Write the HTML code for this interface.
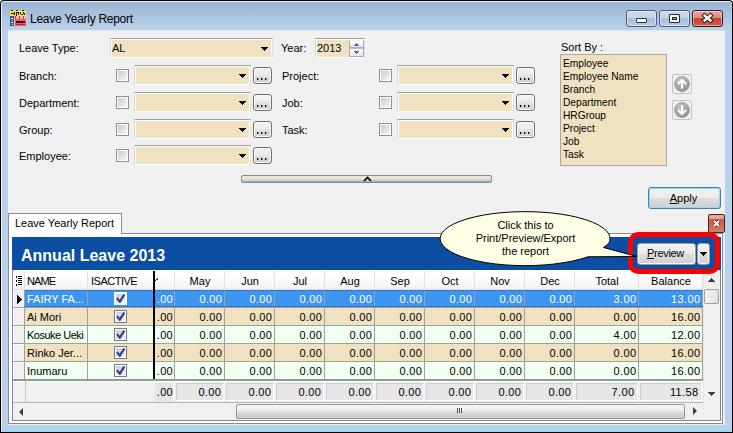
<!DOCTYPE html><html><head><meta charset="utf-8"><style>
*{margin:0;padding:0;box-sizing:border-box}
html,body{width:733px;height:433px;overflow:hidden;background:#f0f0f0}
body{position:relative;font-family:"Liberation Sans",sans-serif;font-size:11px;color:#000}
div{position:absolute}
.t{white-space:nowrap;line-height:13px;font-size:11px}
.cb{border:1px solid #8e8f8f;background:linear-gradient(135deg,#c6c6c6,#fbfbfb);box-shadow:inset 0 0 0 1px #fff}
.combo{background:#f0e2c0;border-top:1px solid #a0a0a0;border-left:1px solid #d8d8d8;border-right:1px solid #e2e2e2;box-shadow:inset 0 0 0 1px #fff}
.arr{width:7px;height:4px;background:#000;clip-path:polygon(0 0,7px 0,7px 1px,6px 1px,6px 2px,5px 2px,5px 3px,4px 3px,4px 4px,3px 4px,3px 3px,2px 3px,2px 2px,1px 2px,1px 1px,0 1px)}
.arru{width:7px;height:4px;background:#000;clip-path:polygon(3px 0,4px 0,4px 1px,5px 1px,5px 2px,6px 2px,6px 3px,7px 3px,7px 4px,0 4px,0 3px,1px 3px,1px 2px,2px 2px,2px 1px,3px 1px)}
.btn3{border:1px solid #707070;border-radius:3px;background:linear-gradient(#f4f4f4 0%,#ececec 40%,#dcdcdc 60%,#d0d0d0 100%);box-shadow:inset 0 0 0 1px #fafafa}
.dot{width:2px;height:2px;background:linear-gradient(90deg,#000 50%,#9a9a9a 50%)}
</style></head><body>
<div style="left:0px;top:0px;width:733px;height:433px;background:#000;border-radius:4px 4px 0 0"></div>
<div style="left:1px;top:1px;width:731px;height:431px;background:#b9d1ea;border-radius:3px 3px 0 0;border-top:1px solid #e9f0f8;border-left:1px solid #e4f0fa;border-right:1px solid #a2dcf7;border-bottom:2px solid #90def8"></div>
<div style="left:2px;top:2px;width:729px;height:28px;background:linear-gradient(#9ab4d2,#bad2ea);border-radius:2px 2px 0 0"></div>
<div style="left:8px;top:30px;width:717px;height:395px;background:#f0f0f0;border:1px solid #e6edf5;border-top-color:#dde6f0"></div>
<svg style="position:absolute;left:10px;top:10px" width="16" height="16" viewBox="0 0 16 16" shape-rendering="crispEdges">
<rect x="0" y="0" width="16" height="16" fill="#f2b4b0"/>
<rect x="0" y="1" width="16" height="5" fill="#f5e62e"/>
<rect x="1" y="0" width="2" height="1" fill="#222"/><rect x="6" y="0" width="2" height="1" fill="#222"/><rect x="12" y="0" width="2" height="1" fill="#222"/>
<path d="M1 3h3v1h-3zM4 2h1v3h-1zM6 2h1v4h-1zM7 2h2v1h-2zM8 3h1v2h-1zM10 2h1v2h-1zM11 4h2v1h-2zM13 2h1v2h-1zM14 3h1v2h-1z" fill="#1a1a1a"/>
<rect x="0" y="6" width="4" height="10" fill="#2a4fc0"/>
<rect x="1" y="8" width="2" height="1" fill="#fff"/><rect x="2" y="10" width="1" height="1" fill="#fff"/><rect x="1" y="12" width="2" height="1" fill="#fff"/><rect x="2" y="14" width="1" height="1" fill="#fff"/>
<rect x="5" y="6" width="1" height="3" fill="#d03040"/><rect x="9" y="6" width="1" height="3" fill="#d03040"/><rect x="13" y="6" width="1" height="3" fill="#d03040"/>
<rect x="5" y="9" width="11" height="7" fill="#e8606a"/>
<rect x="6" y="11" width="9" height="2" fill="#3a0a10"/>
<rect x="6" y="14" width="9" height="1" fill="#c02030"/>
</svg>
<div class="t" style="left:30px;top:12px;text-align:left;font-size:12px;letter-spacing:-0.28px;line-height:15px">Leave Yearly Report</div>
<div style="left:626px;top:10px;width:31px;height:17px;background:linear-gradient(#cbdcee 0%,#c2d5eb 45%,#a7c0dd 50%,#b3cbe5 100%);border:1px solid #4a5c74;border-radius:3px;box-shadow:inset 0 0 0 1px rgba(255,255,255,.45)"></div>
<div style="left:659px;top:10px;width:31px;height:17px;background:linear-gradient(#cbdcee 0%,#c2d5eb 45%,#a7c0dd 50%,#b3cbe5 100%);border:1px solid #4a5c74;border-radius:3px;box-shadow:inset 0 0 0 1px rgba(255,255,255,.45)"></div>
<div style="left:692px;top:10px;width:31px;height:17px;background:linear-gradient(#e9a99b 0%,#dc8b7b 45%,#c5452f 50%,#cf5a42 100%);border:1px solid #2f1e23;border-radius:3px;box-shadow:inset 0 0 0 1px rgba(255,255,255,.45)"></div>
<div style="left:636px;top:18px;width:11px;height:5px;background:#fff;border:1px solid #333;border-radius:1px"></div>
<div style="left:669px;top:14px;width:11px;height:9px;border:1px solid #2a2a2a;border-radius:1px;background:#fff"><div style="left:2px;top:2px;width:5px;height:3px;border:1px solid #2a2a2a;background:#9fb4cc"></div></div>
<svg style="position:absolute;left:701px;top:12px" width="13" height="12" viewBox="0 0 13 12">
<path d="M3.5 3.5L9.5 8.5M9.5 3.5L3.5 8.5" stroke="#2a1a1a" stroke-width="4.4" stroke-linecap="square"/>
<path d="M3.5 3.5L9.5 8.5M9.5 3.5L3.5 8.5" stroke="#fff" stroke-width="2.4" stroke-linecap="square"/>
</svg>
<div class="t" style="left:19px;top:42px;text-align:left;">Leave Type:</div>
<div class="combo" style="left:110px;top:38px;width:163px;height:20px"></div>
<div class="t" style="left:112px;top:42px;text-align:left;">AL</div>
<div class="arr" style="left:261px;top:47px"></div>
<div class="t" style="left:281px;top:42px;text-align:left;">Year:</div>
<div class="combo" style="left:315px;top:38px;width:50px;height:20px;background:#fbfbfb"></div>
<div style="left:317px;top:40px;width:32px;height:17px;background:#f0e2c0"></div>
<div class="t" style="left:317px;top:42px;text-align:left;">2013</div>
<div style="left:349px;top:40px;width:15px;height:8px;border:1px solid #a9a9b0;border-top-color:#f4f4f4;background:linear-gradient(#fdfdfd,#e8e8ea)"></div>
<div style="left:349px;top:48px;width:15px;height:9px;border:1px solid #a9a9b0;border-top-color:#bdbdc4;background:linear-gradient(#fdfdfd,#e8e8ea)"></div>
<div style="left:354px;top:43px;width:5px;height:3px;background:#5c66a6;clip-path:polygon(2px 0,3px 0,3px 1px,4px 1px,4px 2px,5px 2px,5px 3px,0 3px,0 2px,1px 2px,1px 1px,2px 1px)"></div>
<div style="left:354px;top:51px;width:5px;height:3px;background:#5c66a6;clip-path:polygon(0 0,5px 0,5px 1px,4px 1px,4px 2px,3px 2px,3px 3px,2px 3px,2px 2px,1px 2px,1px 1px,0 1px)"></div>
<div class="t" style="left:19px;top:70px;text-align:left;">Branch:</div>
<div class="cb" style="left:116px;top:69px;width:13px;height:13px"></div>
<div class="combo" style="left:134px;top:65px;width:117px;height:20px"></div>
<div class="arr" style="left:239px;top:74px"></div>
<div class="btn3" style="left:253px;top:67px;width:19px;height:17px"></div>
<div class="dot" style="left:257px;top:78px"></div>
<div class="dot" style="left:261px;top:78px"></div>
<div class="dot" style="left:265px;top:78px"></div>
<div class="t" style="left:282px;top:70px;text-align:left;">Project:</div>
<div class="cb" style="left:379px;top:69px;width:13px;height:13px"></div>
<div class="combo" style="left:397px;top:65px;width:117px;height:20px"></div>
<div class="arr" style="left:502px;top:74px"></div>
<div class="btn3" style="left:516px;top:67px;width:19px;height:17px"></div>
<div class="dot" style="left:520px;top:78px"></div>
<div class="dot" style="left:524px;top:78px"></div>
<div class="dot" style="left:528px;top:78px"></div>
<div class="t" style="left:19px;top:97px;text-align:left;">Department:</div>
<div class="cb" style="left:116px;top:96px;width:13px;height:13px"></div>
<div class="combo" style="left:134px;top:92px;width:117px;height:20px"></div>
<div class="arr" style="left:239px;top:101px"></div>
<div class="btn3" style="left:253px;top:94px;width:19px;height:17px"></div>
<div class="dot" style="left:257px;top:105px"></div>
<div class="dot" style="left:261px;top:105px"></div>
<div class="dot" style="left:265px;top:105px"></div>
<div class="t" style="left:282px;top:97px;text-align:left;">Job:</div>
<div class="cb" style="left:379px;top:96px;width:13px;height:13px"></div>
<div class="combo" style="left:397px;top:92px;width:117px;height:20px"></div>
<div class="arr" style="left:502px;top:101px"></div>
<div class="btn3" style="left:516px;top:94px;width:19px;height:17px"></div>
<div class="dot" style="left:520px;top:105px"></div>
<div class="dot" style="left:524px;top:105px"></div>
<div class="dot" style="left:528px;top:105px"></div>
<div class="t" style="left:19px;top:124px;text-align:left;">Group:</div>
<div class="cb" style="left:116px;top:123px;width:13px;height:13px"></div>
<div class="combo" style="left:134px;top:119px;width:117px;height:20px"></div>
<div class="arr" style="left:239px;top:128px"></div>
<div class="btn3" style="left:253px;top:121px;width:19px;height:17px"></div>
<div class="dot" style="left:257px;top:132px"></div>
<div class="dot" style="left:261px;top:132px"></div>
<div class="dot" style="left:265px;top:132px"></div>
<div class="t" style="left:282px;top:124px;text-align:left;">Task:</div>
<div class="cb" style="left:379px;top:123px;width:13px;height:13px"></div>
<div class="combo" style="left:397px;top:119px;width:117px;height:20px"></div>
<div class="arr" style="left:502px;top:128px"></div>
<div class="btn3" style="left:516px;top:121px;width:19px;height:17px"></div>
<div class="dot" style="left:520px;top:132px"></div>
<div class="dot" style="left:524px;top:132px"></div>
<div class="dot" style="left:528px;top:132px"></div>
<div class="t" style="left:19px;top:150px;text-align:left;">Employee:</div>
<div class="cb" style="left:116px;top:149px;width:13px;height:13px"></div>
<div class="combo" style="left:134px;top:145px;width:117px;height:20px"></div>
<div class="arr" style="left:239px;top:154px"></div>
<div class="btn3" style="left:253px;top:147px;width:19px;height:17px"></div>
<div class="dot" style="left:257px;top:158px"></div>
<div class="dot" style="left:261px;top:158px"></div>
<div class="dot" style="left:265px;top:158px"></div>
<div style="left:241px;top:175px;width:251px;height:8px;border:1px solid #8b8a82;border-radius:2px;background:linear-gradient(#f2e3c4 0%,#ece4d0 40%,#d9e4ea 55%,#93a9bb 100%)"></div>
<svg style="position:absolute;left:363px;top:176px" width="9" height="6" viewBox="0 0 9 6"><path d="M1 5L4.5 1.5L8 5" stroke="#000" stroke-width="1.6" fill="none"/></svg>
<div class="t" style="left:561px;top:41px;text-align:left;">Sort By :</div>
<div style="left:560px;top:54px;width:107px;height:112px;background:#f0e2c0;border:1px solid #a8a8a8"></div>
<div class="t" style="left:563px;top:57px;text-align:left;font-size:10.2px">Employee</div>
<div class="t" style="left:563px;top:70px;text-align:left;font-size:10.2px">Employee Name</div>
<div class="t" style="left:563px;top:83px;text-align:left;font-size:10.2px">Branch</div>
<div class="t" style="left:563px;top:96px;text-align:left;font-size:10.2px">Department</div>
<div class="t" style="left:563px;top:109px;text-align:left;font-size:10.2px">HRGroup</div>
<div class="t" style="left:563px;top:122px;text-align:left;font-size:10.2px">Project</div>
<div class="t" style="left:563px;top:135px;text-align:left;font-size:10.2px">Job</div>
<div class="t" style="left:563px;top:148px;text-align:left;font-size:10.2px">Task</div>
<div style="left:672px;top:74px;width:20px;height:20px;border:1px solid #c4c4c4;border-radius:2px;background:#f0f0f0"></div>
<svg style="position:absolute;left:674px;top:76px" width="16" height="16" viewBox="0 0 16 16">
<defs><radialGradient id="g74" cx="0.4" cy="0.3" r="0.8"><stop offset="0" stop-color="#c8c8c8"/><stop offset="1" stop-color="#8a8a8a"/></radialGradient></defs>
<circle cx="8" cy="8" r="7.5" fill="url(#g74)" stroke="#9a9a9a" stroke-width="0.8"/>
<path d="M8 12V4M4.5 7.5L8 4L11.5 7.5" stroke="#fff" stroke-width="2" fill="none" stroke-linecap="round"/></svg>
<div style="left:672px;top:100px;width:20px;height:20px;border:1px solid #c4c4c4;border-radius:2px;background:#f0f0f0"></div>
<svg style="position:absolute;left:674px;top:102px" width="16" height="16" viewBox="0 0 16 16">
<defs><radialGradient id="g100" cx="0.4" cy="0.3" r="0.8"><stop offset="0" stop-color="#c8c8c8"/><stop offset="1" stop-color="#8a8a8a"/></radialGradient></defs>
<circle cx="8" cy="8" r="7.5" fill="url(#g100)" stroke="#9a9a9a" stroke-width="0.8"/>
<path d="M8 4V12M4.5 8.5L8 12L11.5 8.5" stroke="#fff" stroke-width="2" fill="none" stroke-linecap="round"/></svg>
<div style="left:648px;top:187px;width:73px;height:22px;border:1px solid #3c7fb1;border-radius:3px;background:linear-gradient(#f2f2f2 0%,#ebebeb 50%,#dddddd 51%,#cfcfcf 100%);box-shadow:inset 0 0 0 1px #8fdcf6"></div>
<div class="t" style="left:647px;top:192px;width:73px;text-align:center;"><u>A</u>pply</div>
<div style="left:8px;top:213px;width:114px;height:21px;background:#fff;border:1px solid #898c95;border-bottom:none"></div>
<div class="t" style="left:15px;top:217px;text-align:left;">Leave Yearly Report</div>
<div style="left:8px;top:233px;width:715px;height:191px;background:#fff;border:1px solid #898c95"></div>
<div style="left:9px;top:233px;width:112px;height:2px;background:#fff"></div>
<div style="left:708px;top:214px;width:17px;height:19px;border:1px solid #3d2b2b;border-radius:2px;background:linear-gradient(#eba999 0%,#e6a090 22%,#c65a48 24%,#cc6a58 70%,#d88070 100%)"></div>
<svg style="position:absolute;left:712px;top:219px" width="9" height="9" viewBox="0 0 9 9"><path d="M2 2L7 7M7 2L2 7" stroke="#5a2a22" stroke-width="3.2"/><path d="M2 2L7 7M7 2L2 7" stroke="#fff" stroke-width="1.8"/></svg>
<div style="left:12px;top:237px;width:709px;height:184px;background:#f0f0f0;border:1px solid #828790"></div>
<div style="left:12px;top:237px;width:709px;height:33px;background:#0b4ea2"></div>
<div class="t" style="left:21px;top:246px;text-align:left;font-size:16px;font-weight:bold;color:#fff;line-height:19px">Annual Leave 2013</div>
<div style="left:637px;top:243px;width:59px;height:22px;border:1px solid #9a9a9a;border-radius:3px;box-shadow:inset 0 0 0 1px #f8f8f8;background:linear-gradient(#f2f2f2 0%,#ebebeb 50%,#dddddd 51%,#cfcfcf 100%)"></div>
<div class="t" style="left:636px;top:247px;width:59px;text-align:center;letter-spacing:-0.3px"><u>P</u>review</div>
<div style="left:697px;top:243px;width:13px;height:22px;border:1px solid #9a9a9a;border-radius:3px;box-shadow:inset 0 0 0 1px #f8f8f8;background:linear-gradient(#f2f2f2 0%,#ebebeb 50%,#dddddd 51%,#cfcfcf 100%)"></div>
<div class="arr" style="left:700px;top:252px"></div>
<div style="left:13px;top:270px;width:690px;height:20px;background:linear-gradient(#ffffff 0%,#ffffff 30%,#f2f2f2 100%);border-bottom:1px solid #e2dcdc"></div>
<div style="left:24px;top:271px;width:1px;height:18px;background:#e0e0e0"></div>
<div style="left:87px;top:271px;width:1px;height:18px;background:#e0e0e0"></div>
<div class="t" style="left:27px;top:275px;text-align:left;letter-spacing:-0.9px">NAME</div>
<div style="left:153px;top:271px;width:1px;height:18px;background:#e0e0e0"></div>
<div class="t" style="left:91px;top:275px;text-align:left;letter-spacing:-0.5px">ISACTIVE</div>
<div style="left:174px;top:271px;width:1px;height:18px;background:#e0e0e0"></div>
<div style="left:224px;top:271px;width:1px;height:18px;background:#e0e0e0"></div>
<div class="t" style="left:175px;top:275px;width:50px;text-align:center;">May</div>
<div style="left:274px;top:271px;width:1px;height:18px;background:#e0e0e0"></div>
<div class="t" style="left:225px;top:275px;width:50px;text-align:center;">Jun</div>
<div style="left:324px;top:271px;width:1px;height:18px;background:#e0e0e0"></div>
<div class="t" style="left:275px;top:275px;width:50px;text-align:center;">Jul</div>
<div style="left:374px;top:271px;width:1px;height:18px;background:#e0e0e0"></div>
<div class="t" style="left:325px;top:275px;width:50px;text-align:center;">Aug</div>
<div style="left:424px;top:271px;width:1px;height:18px;background:#e0e0e0"></div>
<div class="t" style="left:375px;top:275px;width:50px;text-align:center;">Sep</div>
<div style="left:474px;top:271px;width:1px;height:18px;background:#e0e0e0"></div>
<div class="t" style="left:425px;top:275px;width:50px;text-align:center;">Oct</div>
<div style="left:524px;top:271px;width:1px;height:18px;background:#e0e0e0"></div>
<div class="t" style="left:475px;top:275px;width:50px;text-align:center;">Nov</div>
<div style="left:574px;top:271px;width:1px;height:18px;background:#e0e0e0"></div>
<div class="t" style="left:525px;top:275px;width:50px;text-align:center;">Dec</div>
<div style="left:638px;top:271px;width:1px;height:18px;background:#e0e0e0"></div>
<div class="t" style="left:575px;top:275px;width:64px;text-align:center;">Total</div>
<div style="left:702px;top:271px;width:1px;height:18px;background:#e0e0e0"></div>
<div class="t" style="left:639px;top:275px;width:64px;text-align:center;">Balance</div>
<div style="left:16px;top:276px;width:1px;height:2px;background:#000"></div>
<div style="left:16px;top:280px;width:1px;height:2px;background:#000"></div>
<div style="left:16px;top:284px;width:1px;height:2px;background:#000"></div>
<div style="left:18px;top:276px;width:4px;height:1px;background:#000"></div>
<div style="left:18px;top:278px;width:4px;height:1px;background:#000"></div>
<div style="left:18px;top:280px;width:4px;height:1px;background:#000"></div>
<div style="left:18px;top:282px;width:4px;height:1px;background:#000"></div>
<div style="left:18px;top:284px;width:4px;height:1px;background:#000"></div>
<div style="left:155px;top:280px;width:1px;height:1px;background:#000"></div>
<div style="left:156px;top:279px;width:1px;height:1px;background:#222"></div>
<div style="left:157px;top:278px;width:1px;height:2px;background:#444"></div>
<div style="left:13px;top:290px;width:12px;height:18px;background:#f0f0f0;border-bottom:1px solid #a0a0a0;border-right:1px solid #a0a0a0;box-shadow:inset 1px 1px 0 #fff"></div>
<div style="left:25px;top:290px;width:678px;height:18px;background:#3d95f2;border-bottom:1px solid #a0a0a0"></div>
<div style="left:87px;top:290px;width:1px;height:18px;background:#a0a0a0"></div>
<div style="left:153px;top:290px;width:1px;height:18px;background:#a0a0a0"></div>
<div style="left:174px;top:290px;width:1px;height:18px;background:#a0a0a0"></div>
<div style="left:224px;top:290px;width:1px;height:18px;background:#a0a0a0"></div>
<div style="left:274px;top:290px;width:1px;height:18px;background:#a0a0a0"></div>
<div style="left:324px;top:290px;width:1px;height:18px;background:#a0a0a0"></div>
<div style="left:374px;top:290px;width:1px;height:18px;background:#a0a0a0"></div>
<div style="left:424px;top:290px;width:1px;height:18px;background:#a0a0a0"></div>
<div style="left:474px;top:290px;width:1px;height:18px;background:#a0a0a0"></div>
<div style="left:524px;top:290px;width:1px;height:18px;background:#a0a0a0"></div>
<div style="left:574px;top:290px;width:1px;height:18px;background:#a0a0a0"></div>
<div style="left:638px;top:290px;width:1px;height:18px;background:#a0a0a0"></div>
<div style="left:702px;top:290px;width:1px;height:18px;background:#a0a0a0"></div>
<div class="t" style="left:27px;top:293px;text-align:left;color:#fff">FAIRY FA...</div>
<div style="left:114px;top:292px;width:13px;height:13px;border:1px solid #f4f4f4;background:linear-gradient(135deg,#c4c7ce,#f4f4f4);box-shadow:inset 0 0 0 1px #fff"></div>
<svg style="position:absolute;left:114px;top:292px" width="13" height="13" viewBox="0 0 13 13"><path d="M3 6.2L5.8 9.6L10.3 2.6" stroke="#2c3e8a" stroke-width="2.1" fill="none"/></svg>
<div class="t" style="left:154px;top:293px;width:19px;text-align:right;color:#fff;letter-spacing:0.3px">.00</div>
<div class="t" style="left:175px;top:293px;width:47.4px;text-align:right;color:#fff;letter-spacing:0.4px">0.00</div>
<div class="t" style="left:225px;top:293px;width:47.4px;text-align:right;color:#fff;letter-spacing:0.4px">0.00</div>
<div class="t" style="left:275px;top:293px;width:47.4px;text-align:right;color:#fff;letter-spacing:0.4px">0.00</div>
<div class="t" style="left:325px;top:293px;width:47.4px;text-align:right;color:#fff;letter-spacing:0.4px">0.00</div>
<div class="t" style="left:375px;top:293px;width:47.4px;text-align:right;color:#fff;letter-spacing:0.4px">0.00</div>
<div class="t" style="left:425px;top:293px;width:47.4px;text-align:right;color:#fff;letter-spacing:0.4px">0.00</div>
<div class="t" style="left:475px;top:293px;width:47.4px;text-align:right;color:#fff;letter-spacing:0.4px">0.00</div>
<div class="t" style="left:525px;top:293px;width:47.4px;text-align:right;color:#fff;letter-spacing:0.4px">0.00</div>
<div class="t" style="left:575px;top:293px;width:61.6px;text-align:right;color:#fff;letter-spacing:0.4px">3.00</div>
<div class="t" style="left:639px;top:293px;width:61.6px;text-align:right;color:#fff;letter-spacing:0.4px">13.00</div>
<div style="left:25px;top:290px;width:678px;height:1px;background:repeating-linear-gradient(90deg,#2e5c98 0 1px,#3d95f2 1px 2px)"></div>
<div style="left:25px;top:306px;width:678px;height:1px;background:repeating-linear-gradient(90deg,#2e5c98 0 1px,#3d95f2 1px 2px)"></div>
<svg style="position:absolute;left:17px;top:295px" width="5" height="9" viewBox="0 0 5 9" shape-rendering="crispEdges"><path d="M0 0h1v1h1v1h1v1h1v1h1v1h-1v1h-1v1h-1v1h-1v1h-1z" fill="#000"/></svg>
<div style="left:13px;top:308px;width:12px;height:18px;background:#f0f0f0;border-bottom:1px solid #a0a0a0;border-right:1px solid #a0a0a0;box-shadow:inset 1px 1px 0 #fff"></div>
<div style="left:25px;top:308px;width:678px;height:18px;background:#f0e2c0;border-bottom:1px solid #a0a0a0"></div>
<div style="left:87px;top:308px;width:1px;height:18px;background:#a0a0a0"></div>
<div style="left:153px;top:308px;width:1px;height:18px;background:#a0a0a0"></div>
<div style="left:174px;top:308px;width:1px;height:18px;background:#a0a0a0"></div>
<div style="left:224px;top:308px;width:1px;height:18px;background:#a0a0a0"></div>
<div style="left:274px;top:308px;width:1px;height:18px;background:#a0a0a0"></div>
<div style="left:324px;top:308px;width:1px;height:18px;background:#a0a0a0"></div>
<div style="left:374px;top:308px;width:1px;height:18px;background:#a0a0a0"></div>
<div style="left:424px;top:308px;width:1px;height:18px;background:#a0a0a0"></div>
<div style="left:474px;top:308px;width:1px;height:18px;background:#a0a0a0"></div>
<div style="left:524px;top:308px;width:1px;height:18px;background:#a0a0a0"></div>
<div style="left:574px;top:308px;width:1px;height:18px;background:#a0a0a0"></div>
<div style="left:638px;top:308px;width:1px;height:18px;background:#a0a0a0"></div>
<div style="left:702px;top:308px;width:1px;height:18px;background:#a0a0a0"></div>
<div class="t" style="left:27px;top:311px;text-align:left;color:#000">Ai Mori</div>
<div style="left:114px;top:310px;width:13px;height:13px;border:1px solid #7a7a7a;background:linear-gradient(135deg,#c4c7ce,#f4f4f4);box-shadow:inset 0 0 0 1px #fff"></div>
<svg style="position:absolute;left:114px;top:310px" width="13" height="13" viewBox="0 0 13 13"><path d="M3 6.2L5.8 9.6L10.3 2.6" stroke="#2c3e8a" stroke-width="2.1" fill="none"/></svg>
<div class="t" style="left:154px;top:311px;width:19px;text-align:right;color:#000;letter-spacing:0.3px">.00</div>
<div class="t" style="left:175px;top:311px;width:47.4px;text-align:right;color:#000;letter-spacing:0.4px">0.00</div>
<div class="t" style="left:225px;top:311px;width:47.4px;text-align:right;color:#000;letter-spacing:0.4px">0.00</div>
<div class="t" style="left:275px;top:311px;width:47.4px;text-align:right;color:#000;letter-spacing:0.4px">0.00</div>
<div class="t" style="left:325px;top:311px;width:47.4px;text-align:right;color:#000;letter-spacing:0.4px">0.00</div>
<div class="t" style="left:375px;top:311px;width:47.4px;text-align:right;color:#000;letter-spacing:0.4px">0.00</div>
<div class="t" style="left:425px;top:311px;width:47.4px;text-align:right;color:#000;letter-spacing:0.4px">0.00</div>
<div class="t" style="left:475px;top:311px;width:47.4px;text-align:right;color:#000;letter-spacing:0.4px">0.00</div>
<div class="t" style="left:525px;top:311px;width:47.4px;text-align:right;color:#000;letter-spacing:0.4px">0.00</div>
<div class="t" style="left:575px;top:311px;width:61.6px;text-align:right;color:#000;letter-spacing:0.4px">0.00</div>
<div class="t" style="left:639px;top:311px;width:61.6px;text-align:right;color:#000;letter-spacing:0.4px">16.00</div>
<div style="left:13px;top:326px;width:12px;height:18px;background:#f0f0f0;border-bottom:1px solid #a0a0a0;border-right:1px solid #a0a0a0;box-shadow:inset 1px 1px 0 #fff"></div>
<div style="left:25px;top:326px;width:678px;height:18px;background:#f0fff0;border-bottom:1px solid #a0a0a0"></div>
<div style="left:87px;top:326px;width:1px;height:18px;background:#a0a0a0"></div>
<div style="left:153px;top:326px;width:1px;height:18px;background:#a0a0a0"></div>
<div style="left:174px;top:326px;width:1px;height:18px;background:#a0a0a0"></div>
<div style="left:224px;top:326px;width:1px;height:18px;background:#a0a0a0"></div>
<div style="left:274px;top:326px;width:1px;height:18px;background:#a0a0a0"></div>
<div style="left:324px;top:326px;width:1px;height:18px;background:#a0a0a0"></div>
<div style="left:374px;top:326px;width:1px;height:18px;background:#a0a0a0"></div>
<div style="left:424px;top:326px;width:1px;height:18px;background:#a0a0a0"></div>
<div style="left:474px;top:326px;width:1px;height:18px;background:#a0a0a0"></div>
<div style="left:524px;top:326px;width:1px;height:18px;background:#a0a0a0"></div>
<div style="left:574px;top:326px;width:1px;height:18px;background:#a0a0a0"></div>
<div style="left:638px;top:326px;width:1px;height:18px;background:#a0a0a0"></div>
<div style="left:702px;top:326px;width:1px;height:18px;background:#a0a0a0"></div>
<div class="t" style="left:27px;top:329px;text-align:left;color:#000;letter-spacing:-0.5px">Kosuke Ueki</div>
<div style="left:114px;top:328px;width:13px;height:13px;border:1px solid #7a7a7a;background:linear-gradient(135deg,#c4c7ce,#f4f4f4);box-shadow:inset 0 0 0 1px #fff"></div>
<svg style="position:absolute;left:114px;top:328px" width="13" height="13" viewBox="0 0 13 13"><path d="M3 6.2L5.8 9.6L10.3 2.6" stroke="#2c3e8a" stroke-width="2.1" fill="none"/></svg>
<div class="t" style="left:154px;top:329px;width:19px;text-align:right;color:#000;letter-spacing:0.3px">.00</div>
<div class="t" style="left:175px;top:329px;width:47.4px;text-align:right;color:#000;letter-spacing:0.4px">0.00</div>
<div class="t" style="left:225px;top:329px;width:47.4px;text-align:right;color:#000;letter-spacing:0.4px">0.00</div>
<div class="t" style="left:275px;top:329px;width:47.4px;text-align:right;color:#000;letter-spacing:0.4px">0.00</div>
<div class="t" style="left:325px;top:329px;width:47.4px;text-align:right;color:#000;letter-spacing:0.4px">0.00</div>
<div class="t" style="left:375px;top:329px;width:47.4px;text-align:right;color:#000;letter-spacing:0.4px">0.00</div>
<div class="t" style="left:425px;top:329px;width:47.4px;text-align:right;color:#000;letter-spacing:0.4px">0.00</div>
<div class="t" style="left:475px;top:329px;width:47.4px;text-align:right;color:#000;letter-spacing:0.4px">0.00</div>
<div class="t" style="left:525px;top:329px;width:47.4px;text-align:right;color:#000;letter-spacing:0.4px">0.00</div>
<div class="t" style="left:575px;top:329px;width:61.6px;text-align:right;color:#000;letter-spacing:0.4px">4.00</div>
<div class="t" style="left:639px;top:329px;width:61.6px;text-align:right;color:#000;letter-spacing:0.4px">12.00</div>
<div style="left:13px;top:344px;width:12px;height:18px;background:#f0f0f0;border-bottom:1px solid #a0a0a0;border-right:1px solid #a0a0a0;box-shadow:inset 1px 1px 0 #fff"></div>
<div style="left:25px;top:344px;width:678px;height:18px;background:#f0e2c0;border-bottom:1px solid #a0a0a0"></div>
<div style="left:87px;top:344px;width:1px;height:18px;background:#a0a0a0"></div>
<div style="left:153px;top:344px;width:1px;height:18px;background:#a0a0a0"></div>
<div style="left:174px;top:344px;width:1px;height:18px;background:#a0a0a0"></div>
<div style="left:224px;top:344px;width:1px;height:18px;background:#a0a0a0"></div>
<div style="left:274px;top:344px;width:1px;height:18px;background:#a0a0a0"></div>
<div style="left:324px;top:344px;width:1px;height:18px;background:#a0a0a0"></div>
<div style="left:374px;top:344px;width:1px;height:18px;background:#a0a0a0"></div>
<div style="left:424px;top:344px;width:1px;height:18px;background:#a0a0a0"></div>
<div style="left:474px;top:344px;width:1px;height:18px;background:#a0a0a0"></div>
<div style="left:524px;top:344px;width:1px;height:18px;background:#a0a0a0"></div>
<div style="left:574px;top:344px;width:1px;height:18px;background:#a0a0a0"></div>
<div style="left:638px;top:344px;width:1px;height:18px;background:#a0a0a0"></div>
<div style="left:702px;top:344px;width:1px;height:18px;background:#a0a0a0"></div>
<div class="t" style="left:27px;top:347px;text-align:left;color:#000">Rinko Jer...</div>
<div style="left:114px;top:346px;width:13px;height:13px;border:1px solid #7a7a7a;background:linear-gradient(135deg,#c4c7ce,#f4f4f4);box-shadow:inset 0 0 0 1px #fff"></div>
<svg style="position:absolute;left:114px;top:346px" width="13" height="13" viewBox="0 0 13 13"><path d="M3 6.2L5.8 9.6L10.3 2.6" stroke="#2c3e8a" stroke-width="2.1" fill="none"/></svg>
<div class="t" style="left:154px;top:347px;width:19px;text-align:right;color:#000;letter-spacing:0.3px">.00</div>
<div class="t" style="left:175px;top:347px;width:47.4px;text-align:right;color:#000;letter-spacing:0.4px">0.00</div>
<div class="t" style="left:225px;top:347px;width:47.4px;text-align:right;color:#000;letter-spacing:0.4px">0.00</div>
<div class="t" style="left:275px;top:347px;width:47.4px;text-align:right;color:#000;letter-spacing:0.4px">0.00</div>
<div class="t" style="left:325px;top:347px;width:47.4px;text-align:right;color:#000;letter-spacing:0.4px">0.00</div>
<div class="t" style="left:375px;top:347px;width:47.4px;text-align:right;color:#000;letter-spacing:0.4px">0.00</div>
<div class="t" style="left:425px;top:347px;width:47.4px;text-align:right;color:#000;letter-spacing:0.4px">0.00</div>
<div class="t" style="left:475px;top:347px;width:47.4px;text-align:right;color:#000;letter-spacing:0.4px">0.00</div>
<div class="t" style="left:525px;top:347px;width:47.4px;text-align:right;color:#000;letter-spacing:0.4px">0.00</div>
<div class="t" style="left:575px;top:347px;width:61.6px;text-align:right;color:#000;letter-spacing:0.4px">0.00</div>
<div class="t" style="left:639px;top:347px;width:61.6px;text-align:right;color:#000;letter-spacing:0.4px">16.00</div>
<div style="left:13px;top:362px;width:12px;height:18px;background:#f0f0f0;border-bottom:1px solid #a0a0a0;border-right:1px solid #a0a0a0;box-shadow:inset 1px 1px 0 #fff"></div>
<div style="left:25px;top:362px;width:678px;height:18px;background:#f0fff0;border-bottom:1px solid #a0a0a0"></div>
<div style="left:87px;top:362px;width:1px;height:18px;background:#a0a0a0"></div>
<div style="left:153px;top:362px;width:1px;height:18px;background:#a0a0a0"></div>
<div style="left:174px;top:362px;width:1px;height:18px;background:#a0a0a0"></div>
<div style="left:224px;top:362px;width:1px;height:18px;background:#a0a0a0"></div>
<div style="left:274px;top:362px;width:1px;height:18px;background:#a0a0a0"></div>
<div style="left:324px;top:362px;width:1px;height:18px;background:#a0a0a0"></div>
<div style="left:374px;top:362px;width:1px;height:18px;background:#a0a0a0"></div>
<div style="left:424px;top:362px;width:1px;height:18px;background:#a0a0a0"></div>
<div style="left:474px;top:362px;width:1px;height:18px;background:#a0a0a0"></div>
<div style="left:524px;top:362px;width:1px;height:18px;background:#a0a0a0"></div>
<div style="left:574px;top:362px;width:1px;height:18px;background:#a0a0a0"></div>
<div style="left:638px;top:362px;width:1px;height:18px;background:#a0a0a0"></div>
<div style="left:702px;top:362px;width:1px;height:18px;background:#a0a0a0"></div>
<div class="t" style="left:27px;top:365px;text-align:left;color:#000">Inumaru</div>
<div style="left:114px;top:364px;width:13px;height:13px;border:1px solid #7a7a7a;background:linear-gradient(135deg,#c4c7ce,#f4f4f4);box-shadow:inset 0 0 0 1px #fff"></div>
<svg style="position:absolute;left:114px;top:364px" width="13" height="13" viewBox="0 0 13 13"><path d="M3 6.2L5.8 9.6L10.3 2.6" stroke="#2c3e8a" stroke-width="2.1" fill="none"/></svg>
<div class="t" style="left:154px;top:365px;width:19px;text-align:right;color:#000;letter-spacing:0.3px">.00</div>
<div class="t" style="left:175px;top:365px;width:47.4px;text-align:right;color:#000;letter-spacing:0.4px">0.00</div>
<div class="t" style="left:225px;top:365px;width:47.4px;text-align:right;color:#000;letter-spacing:0.4px">0.00</div>
<div class="t" style="left:275px;top:365px;width:47.4px;text-align:right;color:#000;letter-spacing:0.4px">0.00</div>
<div class="t" style="left:325px;top:365px;width:47.4px;text-align:right;color:#000;letter-spacing:0.4px">0.00</div>
<div class="t" style="left:375px;top:365px;width:47.4px;text-align:right;color:#000;letter-spacing:0.4px">0.00</div>
<div class="t" style="left:425px;top:365px;width:47.4px;text-align:right;color:#000;letter-spacing:0.4px">0.00</div>
<div class="t" style="left:475px;top:365px;width:47.4px;text-align:right;color:#000;letter-spacing:0.4px">0.00</div>
<div class="t" style="left:525px;top:365px;width:47.4px;text-align:right;color:#000;letter-spacing:0.4px">0.00</div>
<div class="t" style="left:575px;top:365px;width:61.6px;text-align:right;color:#000;letter-spacing:0.4px">0.00</div>
<div class="t" style="left:639px;top:365px;width:61.6px;text-align:right;color:#000;letter-spacing:0.4px">16.00</div>
<div style="left:153px;top:271px;width:2px;height:109px;background:#000"></div>
<div style="left:13px;top:379px;width:690px;height:24px;background:#f0f0f0;border-top:2px solid #909a94;box-shadow:inset 0 1px 0 #fff"></div>
<div style="left:25px;top:381px;width:1px;height:22px;background:#c8c8c8"></div>
<div style="left:155px;top:383px;width:18px;height:18px;background:#e4e4e4"></div>
<div class="t" style="left:154px;top:386px;width:19px;text-align:right;letter-spacing:0.3px">.00</div>
<div style="left:176px;top:383px;width:48px;height:18px;background:#e6e6e6;border:1px solid #d0d0d0;border-right-color:#fff;border-bottom-color:#fff"></div>
<div class="t" style="left:175px;top:386px;width:46.4px;text-align:right;letter-spacing:0.4px">0.00</div>
<div style="left:226px;top:383px;width:48px;height:18px;background:#e6e6e6;border:1px solid #d0d0d0;border-right-color:#fff;border-bottom-color:#fff"></div>
<div class="t" style="left:225px;top:386px;width:46.4px;text-align:right;letter-spacing:0.4px">0.00</div>
<div style="left:276px;top:383px;width:48px;height:18px;background:#e6e6e6;border:1px solid #d0d0d0;border-right-color:#fff;border-bottom-color:#fff"></div>
<div class="t" style="left:275px;top:386px;width:46.4px;text-align:right;letter-spacing:0.4px">0.00</div>
<div style="left:326px;top:383px;width:48px;height:18px;background:#e6e6e6;border:1px solid #d0d0d0;border-right-color:#fff;border-bottom-color:#fff"></div>
<div class="t" style="left:325px;top:386px;width:46.4px;text-align:right;letter-spacing:0.4px">0.00</div>
<div style="left:376px;top:383px;width:48px;height:18px;background:#e6e6e6;border:1px solid #d0d0d0;border-right-color:#fff;border-bottom-color:#fff"></div>
<div class="t" style="left:375px;top:386px;width:46.4px;text-align:right;letter-spacing:0.4px">0.00</div>
<div style="left:426px;top:383px;width:48px;height:18px;background:#e6e6e6;border:1px solid #d0d0d0;border-right-color:#fff;border-bottom-color:#fff"></div>
<div class="t" style="left:425px;top:386px;width:46.4px;text-align:right;letter-spacing:0.4px">0.00</div>
<div style="left:476px;top:383px;width:48px;height:18px;background:#e6e6e6;border:1px solid #d0d0d0;border-right-color:#fff;border-bottom-color:#fff"></div>
<div class="t" style="left:475px;top:386px;width:46.4px;text-align:right;letter-spacing:0.4px">0.00</div>
<div style="left:526px;top:383px;width:48px;height:18px;background:#e6e6e6;border:1px solid #d0d0d0;border-right-color:#fff;border-bottom-color:#fff"></div>
<div class="t" style="left:525px;top:386px;width:46.4px;text-align:right;letter-spacing:0.4px">0.00</div>
<div style="left:576px;top:383px;width:62px;height:18px;background:#e6e6e6;border:1px solid #d0d0d0;border-right-color:#fff;border-bottom-color:#fff"></div>
<div class="t" style="left:575px;top:386px;width:59.6px;text-align:right;letter-spacing:0.4px">7.00</div>
<div style="left:640px;top:383px;width:62px;height:18px;background:#e6e6e6;border:1px solid #d0d0d0;border-right-color:#fff;border-bottom-color:#fff"></div>
<div class="t" style="left:639px;top:386px;width:59.6px;text-align:right;letter-spacing:0.4px">11.58</div>
<div style="left:703px;top:271px;width:17px;height:132px;background:#f0f0f0;border-left:1px solid #e8e8e8"></div>
<div class="arru" style="left:708px;top:278px;background:#404040"></div>
<div style="left:704px;top:289px;width:15px;height:15px;border:1px solid #a0a0a0;border-radius:2px;background:linear-gradient(90deg,#f4f4f4,#e0e0e0)"></div>
<div class="arr" style="left:708px;top:392px;background:#404040"></div>
<div style="left:13px;top:402px;width:690px;height:18px;background:#f0f0f0;border-top:1px solid #b4b4b4"></div>
<svg style="position:absolute;left:19px;top:408px" width="5" height="8"><path d="M4 0L0 4L4 8Z" fill="#404040"/></svg>
<div style="left:236px;top:404px;width:449px;height:15px;border:1px solid #959595;border-radius:2px;background:linear-gradient(#f7f7f7 0%,#ececec 45%,#dadada 55%,#cdcdcd 100%)"></div>
<div style="left:457px;top:408px;width:1px;height:5px;background:#505050"></div>
<div style="left:459px;top:408px;width:1px;height:5px;background:#505050"></div>
<div style="left:461px;top:408px;width:1px;height:5px;background:#505050"></div>
<svg style="position:absolute;left:693px;top:407px" width="5" height="8"><path d="M0 0L4 4L0 8Z" fill="#404040"/></svg>
<div style="left:703px;top:403px;width:17px;height:17px;background:#f0f0f0"></div>
<div style="left:628px;top:232px;width:92px;height:42px;border:5px solid #f00;border-radius:10px"></div>
<svg style="position:absolute;left:430px;top:205px" width="215" height="70" viewBox="430 205 215 70">
<path d="M 608.7 243.5 A 85 27 0 1 0 588 256.8 L 637 256.5 L 603.5 247.5 Z" fill="#ffffe6" stroke="#000" stroke-width="1"/>
</svg>
<div class="t" style="left:430px;top:219px;width:191px;text-align:center;">Click this to</div>
<div class="t" style="left:430px;top:232px;width:191px;text-align:center;">Print/Preview/Export</div>
<div class="t" style="left:430px;top:245px;width:191px;text-align:center;">the report</div>
</body></html>
